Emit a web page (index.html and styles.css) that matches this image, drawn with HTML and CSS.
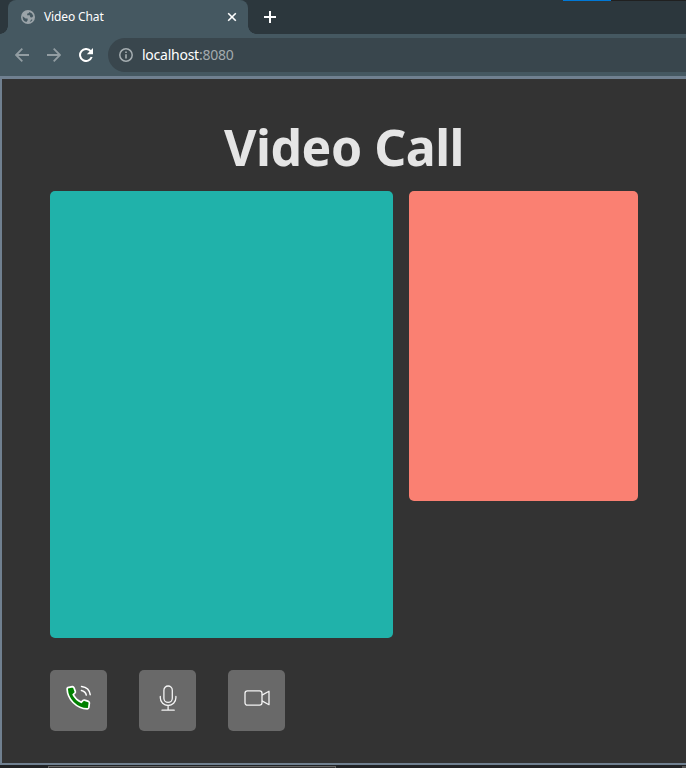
FILE: index.html
```html
<!DOCTYPE html>
<html lang="en">
<head>
<meta charset="utf-8">
<title>Video Chat</title>
<link rel="stylesheet" href="styles.css">
</head>
<body>
<div class="browser">
  <header class="tabs">
    <div class="tab">
      <svg class="globe" width="14" height="14" viewBox="0 0 14 14"><circle cx="7" cy="7" r="7" fill="#9ba4a9"/><path d="M1.7 6.2L4.6 8.4Q5.5 8.7 6.6 8.5L6.7 10.2L5.4 12.1A5.4 5.4 0 0 1 1.7 6.2ZM8.4 1.9Q7.9 3.4 6.3 3.4L6.1 5.3H8.8L9.3 7.2L11 7.5L12.3 6A5.4 5.4 0 0 0 8.4 1.9ZM8.7 12.1L10.2 9.4L11.6 9.8A5.4 5.4 0 0 1 8.7 12.1Z" fill="#455861"/></svg>
      <span class="tab-title">Video Chat</span>
      <svg class="close" width="10" height="10" viewBox="0 0 10 10"><path d="M1.2 1.2L8.8 8.8M8.8 1.2L1.2 8.8" stroke="#fff" stroke-width="1.6"/></svg>
    </div>
    <svg class="plus" width="12" height="12" viewBox="0 0 12 12"><path d="M6 0V12M0 6H12" stroke="#fff" stroke-width="2"/></svg>
    <div class="accent"></div>
  </header>
  <nav class="toolbar">
    <svg width="14" height="14" viewBox="0 0 14 14"><path d="M14 7H1.4M7.3 .7L1 7l6.3 6.3" fill="none" stroke="#929da2" stroke-width="1.8"/></svg>
    <svg width="14" height="14" viewBox="0 0 14 14"><path d="M0 7H12.6M6.7 .7L13 7l-6.3 6.3" fill="none" stroke="#929da2" stroke-width="1.8"/></svg>
    <svg width="14" height="14" viewBox="0 0 14 14"><path d="M11.7 3.2A6 6 0 1 0 12.7 9" fill="none" stroke="#fff" stroke-width="2"/><path d="M14 0V6.2H7.8Z" fill="#fff"/></svg>
    <div class="address">
      <svg width="14" height="14" viewBox="0 0 14 14"><circle cx="7" cy="7" r="6.2" fill="none" stroke="#a5adb1" stroke-width="1.5"/><path d="M7 6.2V10.5M7 3.4V5" stroke="#a5adb1" stroke-width="1.6"/></svg>
      <span class="url">localhost<span class="port">:8080</span></span>
    </div>
  </nav>
  <main class="page">
    <h1>Video Call</h1>
    <section class="videos">
      <div class="video remote"></div>
      <div class="video local"></div>
    </section>
    <div class="controls">
      <button class="control" aria-label="Call"><svg width="26" height="26" viewBox="0 0 26 26"><path d="M1.8 2.6L6.3 1.7Q7.5 1.6 8 2.8L9.3 6.4Q9.6 7.3 8.9 8L7.2 9.7Q9.7 14.6 15.2 17.3L17.1 15.4Q17.8 14.8 18.6 15.1L22.4 16.4Q23.5 16.9 23.4 18L22.8 22.7Q22.6 23.8 21.4 23.9Q13.3 23.7 7.1 17.5Q1.4 11.6 1.1 4Q1 3 1.8 2.6Z" fill="green" stroke="#fff" stroke-width="1.7" stroke-linejoin="round"/><g fill="none" stroke="#fff" stroke-width="1.5" stroke-linecap="round"><path d="M15.5 1.4Q23.4 2.4 24.2 9.7"/><path d="M15.4 5.4Q19.5 6.2 20.3 10.1"/></g></svg></button>
      <button class="control" aria-label="Microphone"><svg width="26" height="26" viewBox="0 0 26 26" fill="none" stroke="#f4f4f4" stroke-width="1.3" stroke-linecap="round"><rect x="8.9" y="1" width="8.4" height="16.4" rx="4.2"/><path d="M5.3 11.5V12.7A7.8 7.8 0 0 0 20.9 12.7V11.5M13.1 20.5V25M7 25.2H19.2"/></svg></button>
      <button class="control" aria-label="Camera"><svg width="26" height="26" viewBox="0 0 26 26" fill="none" stroke="#f4f4f4" stroke-width="1.3" stroke-linejoin="round"><rect x="1" y="5.8" width="17" height="14.4" rx="2.4"/><path d="M18 10.1L25 6.3V19.7L18 15.9"/></svg></button>
    </div>
  </main>
  <footer class="desktop"><div class="window-edge"></div><div class="corner"></div></footer>
</div>
</body>
</html>
```
FILE: styles.css
```css
* { box-sizing: border-box; }
body { margin: 0; background: #333; font-family: "Segoe UI", "Noto Sans", "Open Sans", sans-serif; }
svg { display: block; flex: none; }
.browser { width: 686px; height: 768px; display: flex; flex-direction: column; overflow: hidden; }
.tabs { position: relative; height: 34px; flex: none; display: flex; background: #2c373d; padding-left: 8px; }
.tab { position: relative; width: 240px; height: 34px; background: #455861; border-radius: 8px 8px 0 0; display: flex; align-items: center; padding: 0 11px 0 13px; }
.tab::before, .tab::after { content: ""; position: absolute; bottom: 0; width: 8px; height: 8px; }
.tab::before { left: -8px; background: radial-gradient(circle at 0 0, transparent 7.5px, #455861 8px); }
.tab::after { right: -8px; background: radial-gradient(circle at 100% 0, transparent 7.5px, #455861 8px); }
.tab-title { margin-left: 9px; font-size: 12px; line-height: 16px; color: #fff; letter-spacing: -0.12px; }
.close { margin-left: auto; }
.plus { margin: 11px 0 0 16px; }
.accent { position: absolute; top: 0; right: 0; width: 123px; height: 1px; background: linear-gradient(to right, #0078d7 48px, #202020 48px); }
.toolbar { height: 42px; flex: none; display: flex; align-items: center; gap: 18px; padding-left: 15px; background: #455861; }
.address { flex: 1; height: 34px; margin-left: -3px; display: flex; align-items: center; gap: 9px; padding-left: 11px; background: #39464d; border-radius: 17px 0 0 17px; }
.url { font-size: 14px; line-height: 20px; color: #fff; letter-spacing: -0.25px; }
.port { color: #a3aaae; }
.page { height: 689px; flex: none; background: #333; border: solid #708090; border-width: 3px 0 2px 2px; padding: 32px 48px 0; }
h1 { margin: 0; height: 80px; line-height: 72px; font-size: 50px; font-weight: 700; text-align: center; color: #e5e5e5; letter-spacing: -0.5px; }
.videos { display: flex; gap: 16px; align-items: flex-start; }
.video { border-radius: 5px; }
.remote { width: 343px; height: 447px; background: #20b2aa; }
.local { width: 229px; height: 310px; background: #fa8072; }
.controls { display: flex; gap: 32px; margin-top: 32px; }
.control { width: 57px; height: 61px; border: 0; border-radius: 5px; background: #696969; padding: 15px 0 0 16px; display: flex; align-items: flex-start; }
.desktop { height: 3px; flex: none; display: flex; justify-content: space-between; background: #202224; padding-left: 48px; }
.window-edge { width: 288px; height: 3px; margin-top: 1px; border: 1px solid #666; border-bottom: 0; background: #333; }
.corner { width: 4px; background: #555; margin-top: 1px; }
```
